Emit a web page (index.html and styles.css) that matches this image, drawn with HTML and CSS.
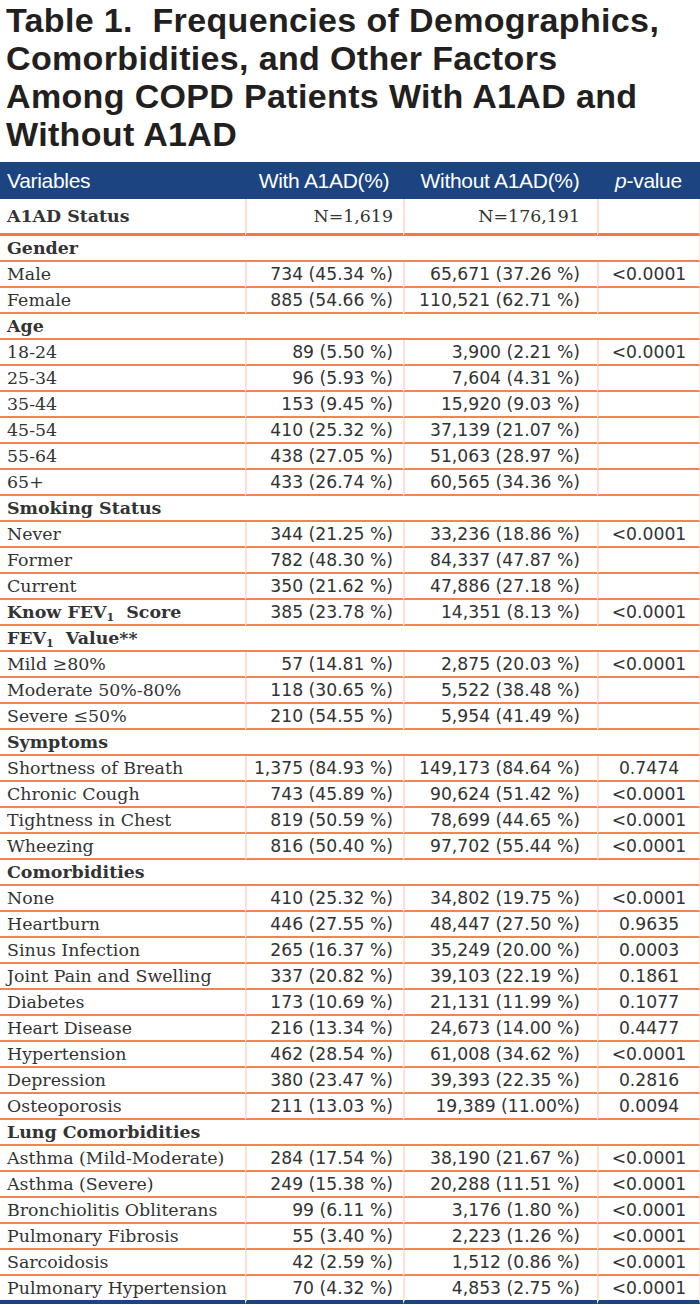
FILE: index.html
```html
<!DOCTYPE html>
<html lang="en">
<head>
<meta charset="utf-8">
<title>Table 1</title>
<link rel="stylesheet" href="styles.css">
</head>
<body>
<h1 class="title">Table 1.&nbsp; Frequencies of Demographics,<br>Comorbidities, and Other Factors<br>Among COPD Patients With A1AD and<br>Without A1AD</h1>
<table class="data">
  <colgroup>
    <col class="c-var"><col class="c-with"><col class="c-without"><col class="c-p">
  </colgroup>
  <thead>
    <tr><th class="var">Variables</th><th>With A1AD(%)</th><th>Without A1AD(%)</th><th><span class="it">p</span>-value</th></tr>
  </thead>
  <tbody>
    <tr class="status"><td class="lbl b">A1AD Status</td><td class="n1 serif">N=1,619</td><td class="n2 serif">N=176,191</td><td class="pv"></td></tr>
    <tr class="cat"><td colspan="4">Gender</td></tr>
    <tr><td class="lbl">Male</td><td class="n1">734 (45.34 %)</td><td class="n2">65,671 (37.26 %)</td><td class="pv">&lt;0.0001</td></tr>
    <tr><td class="lbl">Female</td><td class="n1">885 (54.66 %)</td><td class="n2">110,521 (62.71 %)</td><td class="pv"></td></tr>
    <tr class="cat"><td colspan="4">Age</td></tr>
    <tr><td class="lbl">18-24</td><td class="n1">89 (5.50 %)</td><td class="n2">3,900 (2.21 %)</td><td class="pv">&lt;0.0001</td></tr>
    <tr><td class="lbl">25-34</td><td class="n1">96 (5.93 %)</td><td class="n2">7,604 (4.31 %)</td><td class="pv"></td></tr>
    <tr><td class="lbl">35-44</td><td class="n1">153 (9.45 %)</td><td class="n2">15,920 (9.03 %)</td><td class="pv"></td></tr>
    <tr><td class="lbl">45-54</td><td class="n1">410 (25.32 %)</td><td class="n2">37,139 (21.07 %)</td><td class="pv"></td></tr>
    <tr><td class="lbl">55-64</td><td class="n1">438 (27.05 %)</td><td class="n2">51,063 (28.97 %)</td><td class="pv"></td></tr>
    <tr><td class="lbl">65+</td><td class="n1">433 (26.74 %)</td><td class="n2">60,565 (34.36 %)</td><td class="pv"></td></tr>
    <tr class="cat"><td colspan="4">Smoking Status</td></tr>
    <tr><td class="lbl">Never</td><td class="n1">344 (21.25 %)</td><td class="n2">33,236 (18.86 %)</td><td class="pv">&lt;0.0001</td></tr>
    <tr><td class="lbl">Former</td><td class="n1">782 (48.30 %)</td><td class="n2">84,337 (47.87 %)</td><td class="pv"></td></tr>
    <tr><td class="lbl">Current</td><td class="n1">350 (21.62 %)</td><td class="n2">47,886 (27.18 %)</td><td class="pv"></td></tr>
    <tr><td class="lbl b">Know FEV<span class="sub">1</span>&nbsp; Score</td><td class="n1">385 (23.78 %)</td><td class="n2">14,351 (8.13 %)</td><td class="pv">&lt;0.0001</td></tr>
    <tr class="cat"><td colspan="4">FEV<span class="sub">1</span>&nbsp; Value**</td></tr>
    <tr><td class="lbl">Mild ≥80%</td><td class="n1">57 (14.81 %)</td><td class="n2">2,875 (20.03 %)</td><td class="pv">&lt;0.0001</td></tr>
    <tr><td class="lbl">Moderate 50%-80%</td><td class="n1">118 (30.65 %)</td><td class="n2">5,522 (38.48 %)</td><td class="pv"></td></tr>
    <tr><td class="lbl">Severe ≤50%</td><td class="n1">210 (54.55 %)</td><td class="n2">5,954 (41.49 %)</td><td class="pv"></td></tr>
    <tr class="cat"><td colspan="4">Symptoms</td></tr>
    <tr><td class="lbl">Shortness of Breath</td><td class="n1">1,375 (84.93 %)</td><td class="n2">149,173 (84.64 %)</td><td class="pv">0.7474</td></tr>
    <tr><td class="lbl">Chronic Cough</td><td class="n1">743 (45.89 %)</td><td class="n2">90,624 (51.42 %)</td><td class="pv">&lt;0.0001</td></tr>
    <tr><td class="lbl">Tightness in Chest</td><td class="n1">819 (50.59 %)</td><td class="n2">78,699 (44.65 %)</td><td class="pv">&lt;0.0001</td></tr>
    <tr><td class="lbl">Wheezing</td><td class="n1">816 (50.40 %)</td><td class="n2">97,702 (55.44 %)</td><td class="pv">&lt;0.0001</td></tr>
    <tr class="cat"><td colspan="4">Comorbidities</td></tr>
    <tr><td class="lbl">None</td><td class="n1">410 (25.32 %)</td><td class="n2">34,802 (19.75 %)</td><td class="pv">&lt;0.0001</td></tr>
    <tr><td class="lbl">Heartburn</td><td class="n1">446 (27.55 %)</td><td class="n2">48,447 (27.50 %)</td><td class="pv">0.9635</td></tr>
    <tr><td class="lbl">Sinus Infection</td><td class="n1">265 (16.37 %)</td><td class="n2">35,249 (20.00 %)</td><td class="pv">0.0003</td></tr>
    <tr><td class="lbl">Joint Pain and Swelling</td><td class="n1">337 (20.82 %)</td><td class="n2">39,103 (22.19 %)</td><td class="pv">0.1861</td></tr>
    <tr><td class="lbl">Diabetes</td><td class="n1">173 (10.69 %)</td><td class="n2">21,131 (11.99 %)</td><td class="pv">0.1077</td></tr>
    <tr><td class="lbl">Heart Disease</td><td class="n1">216 (13.34 %)</td><td class="n2">24,673 (14.00 %)</td><td class="pv">0.4477</td></tr>
    <tr><td class="lbl">Hypertension</td><td class="n1">462 (28.54 %)</td><td class="n2">61,008 (34.62 %)</td><td class="pv">&lt;0.0001</td></tr>
    <tr><td class="lbl">Depression</td><td class="n1">380 (23.47 %)</td><td class="n2">39,393 (22.35 %)</td><td class="pv">0.2816</td></tr>
    <tr><td class="lbl">Osteoporosis</td><td class="n1">211 (13.03 %)</td><td class="n2">19,389 (11.00%)</td><td class="pv">0.0094</td></tr>
    <tr class="cat"><td colspan="4">Lung Comorbidities</td></tr>
    <tr><td class="lbl">Asthma (Mild-Moderate)</td><td class="n1">284 (17.54 %)</td><td class="n2">38,190 (21.67 %)</td><td class="pv">&lt;0.0001</td></tr>
    <tr><td class="lbl">Asthma (Severe)</td><td class="n1">249 (15.38 %)</td><td class="n2">20,288 (11.51 %)</td><td class="pv">&lt;0.0001</td></tr>
    <tr><td class="lbl">Bronchiolitis Obliterans</td><td class="n1">99 (6.11 %)</td><td class="n2">3,176 (1.80 %)</td><td class="pv">&lt;0.0001</td></tr>
    <tr><td class="lbl">Pulmonary Fibrosis</td><td class="n1">55 (3.40 %)</td><td class="n2">2,223 (1.26 %)</td><td class="pv">&lt;0.0001</td></tr>
    <tr><td class="lbl">Sarcoidosis</td><td class="n1">42 (2.59 %)</td><td class="n2">1,512 (0.86 %)</td><td class="pv">&lt;0.0001</td></tr>
    <tr class="last"><td class="lbl">Pulmonary Hypertension</td><td class="n1">70 (4.32 %)</td><td class="n2">4,853 (2.75 %)</td><td class="pv">&lt;0.0001</td></tr>
  </tbody>
</table>
</body>
</html>
```

FILE: styles.css
```css
html, body {
  margin: 0;
  padding: 0;
  background: #ffffff;
}

body {
  width: 700px;
}

.title {
  margin: 1px 0 9px;
  padding-left: 6px;
  font-family: "Liberation Sans", Arial, sans-serif;
  font-weight: bold;
  font-size: 34px;
  line-height: 38px;
  letter-spacing: 0.35px;
  color: #231f20;
}

.data {
  width: 700px;
  table-layout: fixed;
  border-collapse: separate;
  border-spacing: 0;
}

.c-var { width: 245px; }
.c-with { width: 158px; }
.c-without { width: 194px; }
.c-p { width: 103px; }

.data thead th {
  background: #1b4481;
  color: #ffffff;
  font-family: "Liberation Sans", Arial, sans-serif;
  font-weight: normal;
  font-size: 21px;
  line-height: 37px;
  padding: 0;
  text-align: center;
  letter-spacing: -0.3px;
  white-space: nowrap;
}

.data thead th.var {
  text-align: left;
  padding-left: 7px;
}

.it {
  font-style: italic;
}

.data td {
  padding: 1px 0 0;
  line-height: 23px;
  border-bottom: 2px solid #f28450;
  white-space: nowrap;
  color: #333333;
}

.lbl {
  padding-left: 7px !important;
  font-family: "DejaVu Serif", "Liberation Serif", serif;
  font-size: 17.4px;
  color: #3a3a3a;
}

.b,
.cat td {
  font-family: "DejaVu Serif", "Liberation Serif", serif;
  font-weight: bold;
  font-size: 17.4px;
  color: #333333;
}

.cat td {
  padding-left: 7px !important;
  border-right: 1px solid #fde6da;
}

.n1,
.n2,
.pv {
  font-family: "DejaVu Sans", "Liberation Sans", sans-serif;
  font-size: 17.2px;
  border-left: 2px solid #fce1d3;
}

.n1 {
  text-align: right;
  padding-right: 10px !important;
}

.n2 {
  text-align: right;
  padding-right: 17px !important;
}

.pv {
  text-align: center;
  border-right: 1px solid #fde6da;
}

.serif {
  font-family: "DejaVu Serif", "Liberation Serif", serif;
  font-size: 17.4px;
}

.status td {
  line-height: 33px;
  border-bottom: 3px solid #f07a42;
}

.sub {
  font-size: 11px;
  vertical-align: -3px;
  line-height: 0;
}

.last td {
  border-bottom: 4px solid #1b4481;
}
```
